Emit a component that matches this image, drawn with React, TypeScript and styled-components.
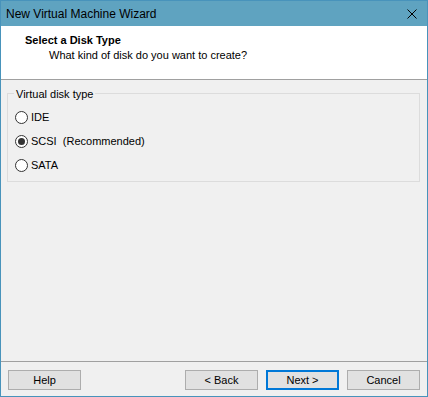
import React, { FC, useState } from 'react';
import styled, { createGlobalStyle } from 'styled-components';

const GlobalStyle = createGlobalStyle`
  html, body {
    margin: 0;
    padding: 0;
    background: #ffffff;
  }
  * {
    box-sizing: border-box;
  }
`;

const Window = styled.div`
  width: 428px;
  height: 397px;
  display: flex;
  flex-direction: column;
  border: 1px solid #4893bb;
  background: #f0f0f0;
  font-family: "Liberation Sans", Arial, sans-serif;
  font-size: 11px;
  color: #000000;
`;

const TitleBar = styled.div`
  height: 25px;
  flex-shrink: 0;
  display: flex;
  align-items: center;
  justify-content: space-between;
  padding: 0 10px 0 5px;
  background: #5fa3c0;
`;

const TitleText = styled.span`
  font-size: 12px;
  line-height: 16px;
  color: #000000;
`;

const Header = styled.div`
  height: 54px;
  flex-shrink: 0;
  display: flex;
  flex-direction: column;
  padding: 8px 0 0 24px;
  background: #ffffff;
  border-bottom: 1px solid #a0a0a0;
`;

const HeaderTitle = styled.div`
  font-weight: 700;
  line-height: 13px;
`;

const HeaderSubtitle = styled.div`
  line-height: 13px;
  margin: 2px 0 0 24px;
`;

const Body = styled.div`
  flex: 1;
  padding-top: 13px;
`;

const GroupBox = styled.div`
  width: 413px;
  margin-left: 6px;
  display: flex;
  flex-direction: column;
  padding: 0 0 4px 7px;
  border: 1px solid #dcdcdc;
`;

const Legend = styled.span`
  align-self: flex-start;
  margin: -6px 0 4px -1px;
  padding: 0 2px;
  line-height: 13px;
  background: #f0f0f0;
`;

const Option = styled.label`
  height: 24px;
  display: flex;
  align-items: center;
  gap: 3px;
  white-space: pre;
`;

const Radio = styled.input`
  appearance: none;
  margin: 0;
  width: 13px;
  height: 13px;
  border: 1px solid #333333;
  border-radius: 50%;
  background: #ffffff;
  display: grid;
  place-items: center;

  &:checked::before {
    content: '';
    width: 7px;
    height: 7px;
    border-radius: 50%;
    background: #333333;
  }
`;

const Footer = styled.div`
  height: 35px;
  flex-shrink: 0;
  display: flex;
  gap: 8px;
  padding: 8px 7px 6px 7px;
  border-top: 1px solid #a0a0a0;
`;

const Spacer = styled.div`
  flex: 1;
`;

const Button = styled.button<{ $primary?: boolean }>`
  width: 73px;
  height: 20px;
  margin: 0;
  padding: 0;
  font-family: "Liberation Sans", Arial, sans-serif;
  font-size: 11px;
  color: #000000;
  background: #e1e1e1;
  border: ${(p) => (p.$primary ? '2px solid #0078d7' : '1px solid #adadad')};
`;

const CloseIcon: FC = () => (
  <svg width='10' height='10' viewBox='0 0 10 10'>
    <path d='M0.5 0.5 L9.5 9.5 M9.5 0.5 L0.5 9.5' stroke='#000000' strokeWidth='1' fill='none' />
  </svg>
);

const options = [
  { id: 'ide', label: 'IDE' },
  { id: 'scsi', label: 'SCSI  (Recommended)' },
  { id: 'sata', label: 'SATA' },
];

const App: FC = () => {
  const [diskType, setDiskType] = useState('scsi');
  return (
    <>
      <GlobalStyle />
      <Window>
        <TitleBar>
          <TitleText>New Virtual Machine Wizard</TitleText>
          <CloseIcon />
        </TitleBar>
        <Header>
          <HeaderTitle>Select a Disk Type</HeaderTitle>
          <HeaderSubtitle>What kind of disk do you want to create?</HeaderSubtitle>
        </Header>
        <Body>
          <GroupBox>
            <Legend>Virtual disk type</Legend>
            {options.map((o) => (
              <Option key={o.id}>
                <Radio
                  type='radio'
                  name='diskType'
                  checked={diskType === o.id}
                  onChange={() => setDiskType(o.id)}
                />
                {o.label}
              </Option>
            ))}
          </GroupBox>
        </Body>
        <Footer>
          <Button type='button'>Help</Button>
          <Spacer />
          <Button type='button'>&lt; Back</Button>
          <Button type='button' $primary>Next &gt;</Button>
          <Button type='button'>Cancel</Button>
        </Footer>
      </Window>
    </>
  );
};

export default App;
